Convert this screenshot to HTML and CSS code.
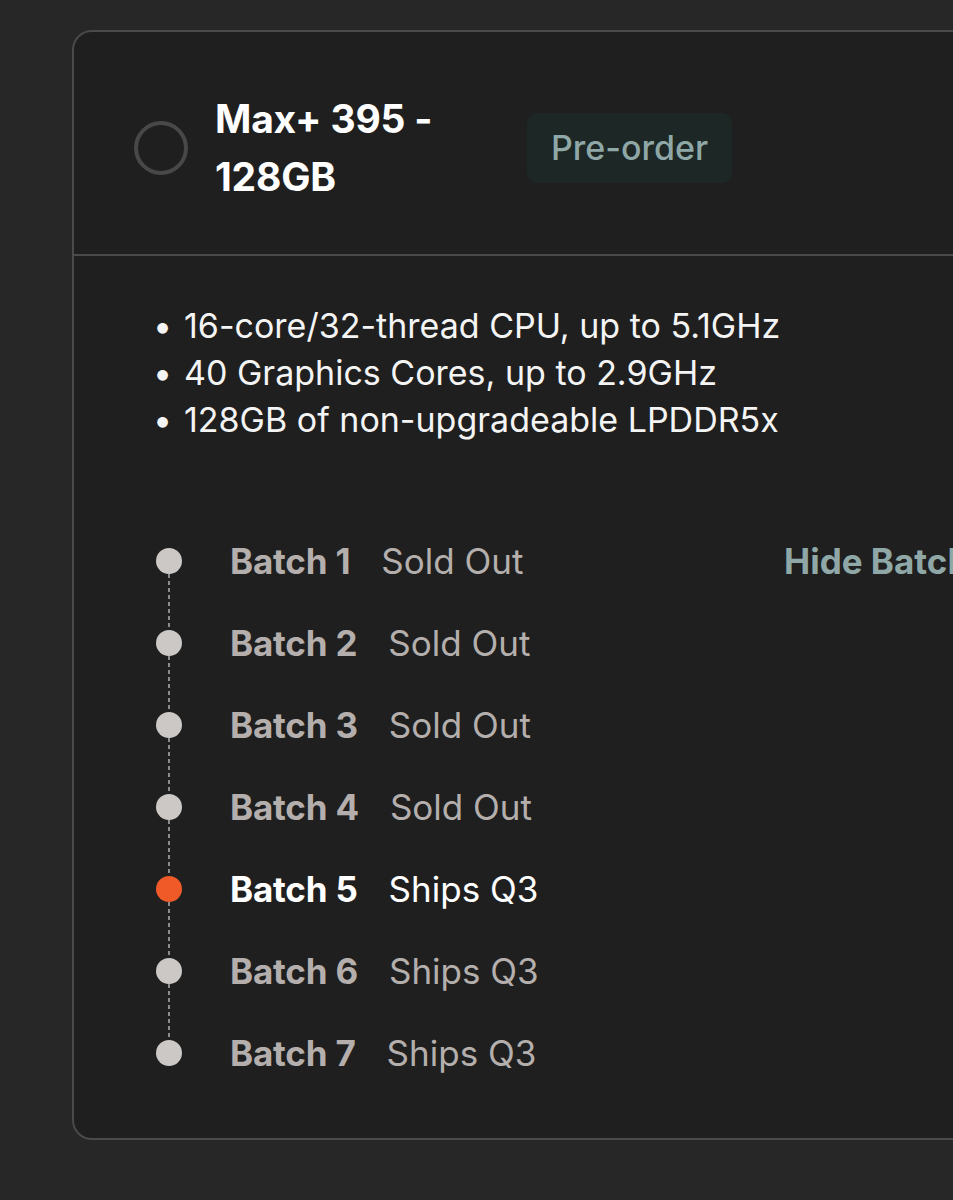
FILE: index.html
```html
<!DOCTYPE html>
<html lang="en">
<head>
<meta charset="utf-8">
<title>Max+ 395 - 128GB</title>
<link rel="stylesheet" href="styles.css">
</head>
<body>
<div class="page">
  <section class="card">
    <header class="card-head">
      <span class="radio" aria-hidden="true"></span>
      <h2 class="title">Max+ 395 - 128GB</h2>
      <span class="badge">Pre-order</span>
    </header>
    <div class="card-body">
      <ul class="specs">
        <li><span class="dotmark">•</span>16-core/32-thread CPU, up to 5.1GHz</li>
        <li><span class="dotmark">•</span>40 Graphics Cores, up to 2.9GHz</li>
        <li><span class="dotmark">•</span>128GB of non-upgradeable LPDDR5x</li>
      </ul>
      <div class="batches">
        <ol class="timeline">
          <li class="step"><span class="node"></span><span class="label">Batch 1</span><span class="status">Sold Out</span></li>
          <li class="step"><span class="node"></span><span class="label">Batch 2</span><span class="status">Sold Out</span></li>
          <li class="step"><span class="node"></span><span class="label">Batch 3</span><span class="status">Sold Out</span></li>
          <li class="step"><span class="node"></span><span class="label">Batch 4</span><span class="status">Sold Out</span></li>
          <li class="step current"><span class="node"></span><span class="label">Batch 5</span><span class="status">Ships Q3</span></li>
          <li class="step"><span class="node"></span><span class="label">Batch 6</span><span class="status">Ships Q3</span></li>
          <li class="step"><span class="node"></span><span class="label">Batch 7</span><span class="status">Ships Q3</span></li>
        </ol>
        <a class="toggle" href="#">Hide Batches</a>
      </div>
    </div>
  </section>
</div>
</body>
</html>
```

FILE: styles.css
```css
html, body {
  margin: 0;
  padding: 0;
  overflow: hidden;
  background: #272727;
}
body {
  font-family: Inter, "Noto Sans", sans-serif;
  color: #ffffff;
}
.page {
  padding: 30px 0 0 72px;
  width: 1200px;
}
.card {
  width: 1100px;
  background: #1f1f1f;
  border: 2px solid #4a4a4a;
  border-radius: 20px;
}
.card-head {
  display: flex;
  align-items: center;
  padding: 58px 0 48px 60px;
  border-bottom: 2px solid #4a4a4a;
}
.radio {
  width: 46px;
  height: 46px;
  border: 4px solid #484848;
  border-radius: 50%;
  flex: none;
}
.title {
  margin: 0 0 0 27px;
  width: 250px;
  font-size: 39px;
  line-height: 58px;
  font-weight: 700;
  letter-spacing: -0.2px;
}
.badge {
  margin-left: 62px;
  padding: 0 24px;
  height: 70px;
  line-height: 70px;
  border-radius: 10px;
  background: #1c2726;
  color: #8fa8a7;
  font-size: 34px;
  font-weight: 500;
}
.card-body {
  padding: 46px 0 44px 79px;
}
.specs {
  list-style: none;
  margin: 0;
  padding: 0;
  font-size: 34px;
  line-height: 47px;
  color: #f4f4f4;
}
.specs li {
  display: flex;
}
.dotmark {
  width: 31px;
  flex: none;
}
.batches {
  display: flex;
  align-items: flex-start;
  margin-top: 77px;
}
.timeline {
  list-style: none;
  margin: 0 0 0 3px;
  padding: 0;
  width: 628px;
}
.step {
  position: relative;
  display: flex;
  align-items: center;
  height: 82px;
  font-size: 35px;
  color: #b4afad;
}
.step::after {
  content: "";
  position: absolute;
  left: 12px;
  top: 54px;
  width: 2px;
  height: 55px;
  background: repeating-linear-gradient(to bottom, #8c8c8c 0 4px, transparent 4px 7px);
}
.step:last-child::after {
  display: none;
}
.node {
  width: 26px;
  height: 26px;
  border-radius: 50%;
  background: #cbc8c6;
  flex: none;
}
.label {
  margin-left: 48px;
  font-weight: 700;
  letter-spacing: -0.2px;
}
.status {
  margin-left: 31px;
  font-weight: 400;
}
.step.current {
  color: #ffffff;
}
.step.current .node {
  background: #f05a28;
}
.toggle {
  line-height: 82px;
  font-size: 35px;
  font-weight: 700;
  color: #8fa8a7;
  text-decoration: none;
  white-space: nowrap;
}
```
